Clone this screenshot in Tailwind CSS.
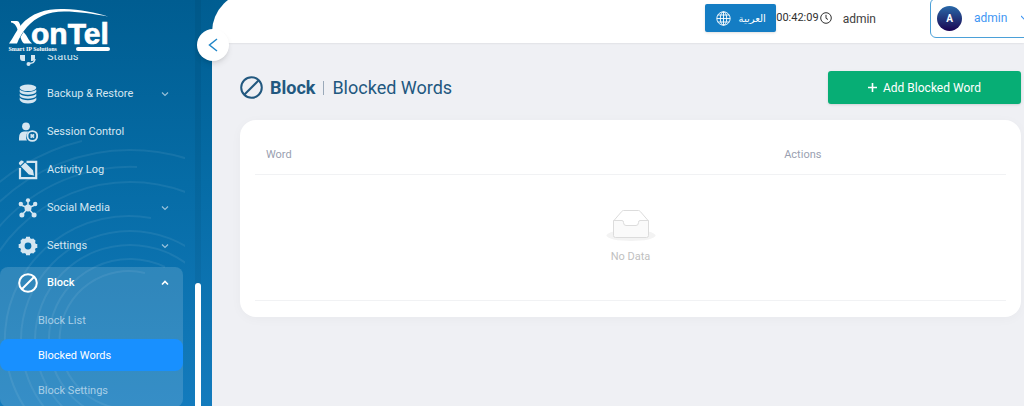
<!DOCTYPE html>
<html lang="en">
<head>
<meta charset="utf-8">
<meta name="viewport" content="width=device-width, initial-scale=1">
<title>XonTel – Blocked Words</title>
<script src="https://cdn.jsdelivr.net/npm/@tailwindcss/browser@4"></script>
</head>
<body class="h-screen overflow-hidden bg-[#eff0f4] font-[Roboto,sans-serif] text-[#22587f]">
<div class="relative flex h-full">

  <!-- Sidebar -->
  <aside class="relative flex w-[212px] shrink-0 flex-col overflow-hidden bg-linear-to-b from-[#005d91] via-[#066ca6] via-45% to-[#137bbd]">
    <svg class="pointer-events-none absolute left-0 top-0 h-[406px] w-[185px]" viewBox="0 0 185 406" fill="none" stroke="#fff" stroke-opacity=".07" stroke-width="2" aria-hidden="true">
      <path d="M-75 340A205 205 0 0 1 82 141"/><circle cx="130" cy="340" r="190"/><path d="M-43 340A173 173 0 0 1 137 167"/><circle cx="130" cy="340" r="158"/><path d="M130 464A124 124 0 1 1 151 218"/>
      <circle cx="130" cy="340" r="109"/><circle cx="130" cy="340" r="95"/><path d="M130 421A81 81 0 1 1 165 267"/><path d="M130 409A69 69 0 1 1 145 273"/>
    </svg>

    <a href="#" aria-label="XonTel Smart IP Solutions" class="relative block h-[55px] shrink-0">
      <svg class="h-[55px] w-[120px]" viewBox="0 0 120 55" fill="#fff">
        <path d="M9 43.500C13 38 16 31 21 25C32 12 48 8.500 64 9C80 9.500 96 12.500 108 16.500C94 14 78 11.500 64 11.500C48 11.500 36 17 27 27C22 33 19 38 17 43.500Z"/>
        <path d="M11 21H17C19 21 20 24 21 27L18 31C17 27 15 23 11 22.500Z"/>
        <path d="M23.500 32L26 35C28 38 29 41 32 43.500H24C22 42 21 39 20.500 37Z"/>
        <text x="31" y="43.500" font-family="Liberation Sans, sans-serif" font-weight="700" font-size="30" stroke="#fff" stroke-width=".7">onTel</text>
        <text x="8.500" y="50.500" font-family="Liberation Serif, serif" font-weight="700" font-size="6">Smart IP Solutions</text>
        <rect x="76" y="47" width="34" height="4" rx="2"/>
      </svg>
    </a>

    <nav class="relative min-h-0 flex-1 overflow-hidden text-[11px] text-[#d5e6f1]">
      <ul class="-mt-[18px] w-[183px]">
        <li><a href="#" class="flex h-[38px] items-center gap-[9px] pl-[18px] pt-[2px]">
          <svg class="size-5" viewBox="0 0 20 20" fill="currentColor"><path d="M2 7h5v7H5q-3 0-3-3zM13 7h4v4q0 3-3 3h-1z"/><path d="M17 12q-.5 4.500-6 4.500" fill="none" stroke="currentColor" stroke-width="1.500"/><circle cx="10.500" cy="17" r="2"/></svg>
          Status</a></li>
        <li><button class="flex h-[38px] w-full items-center gap-[9px] pl-[18px] pr-[14px]">
          <svg class="size-5" viewBox="0 0 20 20" fill="currentColor"><ellipse cx="10" cy="3.800" rx="8.300" ry="3.300"/><path d="M1.700 5.500C4 8.800 16 8.800 18.300 5.500V8C16 11.500 4 11.500 1.700 8zM1.700 9.500C4 13 16 13 18.300 9.500V12C16 15.500 4 15.500 1.700 12zM1.700 13.500C4 17 16 17 18.300 13.500V16C16 20.800 4 20.800 1.700 16z"/></svg>
          <span class="flex-1 text-left">Backup &amp; Restore</span>
          <svg class="size-2" viewBox="0 0 8 8" fill="none" stroke="currentColor" stroke-opacity=".7" stroke-width="1.200"><path d="M1 2.500l3 3 3-3"/></svg></button></li>
        <li><a href="#" class="flex h-[38px] items-center gap-[9px] pl-[18px]">
          <svg class="size-5" viewBox="0 0 20 20" fill="currentColor"><circle cx="8" cy="4.300" r="3.900"/><path d="M1 18.500v-2.500Q1 9.500 6 9.500h4.500Q8 12 8 15q0 2 1 3.500z"/><circle cx="14.300" cy="14" r="4.900" fill="none" stroke="currentColor" stroke-width="1.900"/><path d="M12.600 12.300l3.400 3.400m0-3.400l-3.400 3.400" stroke="currentColor" stroke-width="1.800"/></svg>
          Session Control</a></li>
        <li><a href="#" class="flex h-[38px] items-center gap-[9px] pl-[18px]">
          <svg class="size-5" viewBox="0 0 20 20" fill="currentColor"><path d="M8.500 1.800H18.200V18.200H2V8" fill="none" stroke="currentColor" stroke-width="2.200"/><path d="M1 2.500L3 .6Q4 0 5 1l1 1-3.600 3.600L1.200 4.200Q.5 3.200 1 2.500zM3 6.600L7.100 2.500 15 10.300 16 15.500 10.800 14.400z"/></svg>
          Activity Log</a></li>
        <li><button class="flex h-[38px] w-full items-center gap-[9px] pl-[18px] pr-[14px]">
          <svg class="size-5" viewBox="0 0 20 20" fill="currentColor"><path d="M10 10V3M10 10L3 7M10 10l7-3M10 10l-5.500 6.500M10 10l5.500 6.500" stroke="currentColor" stroke-width="1.500"/><circle cx="10" cy="10" r="3.500"/><circle cx="10" cy="2.300" r="2.100"/><circle cx="2.800" cy="6" r="2.200"/><circle cx="17.200" cy="6" r="2.200"/><circle cx="3.900" cy="17" r="2.500"/><circle cx="16.100" cy="17" r="2.500"/></svg>
          <span class="flex-1 text-left">Social Media</span>
          <svg class="size-2" viewBox="0 0 8 8" fill="none" stroke="currentColor" stroke-opacity=".7" stroke-width="1.200"><path d="M1 2.500l3 3 3-3"/></svg></button></li>
        <li><button class="flex h-[38px] w-full items-center gap-[9px] pl-[18px] pr-[14px]">
          <svg class="size-5" viewBox="0 0 20 20" fill="none" stroke="currentColor"><circle cx="10" cy="10" r="5.700" stroke-width="4.600"/><path d="M10 .7v18.600M.7 10h18.600M3.600 3.600l12.800 12.800M16.400 3.600L3.600 16.400" stroke-width="4" stroke-dasharray="3 100" /><path d="M10 19.300v-3M19.300 10h-3M16.400 16.400l-2-2M3.600 16.400l2-2" stroke-width="4"/></svg>
          <span class="flex-1 text-left">Settings</span>
          <svg class="size-2" viewBox="0 0 8 8" fill="none" stroke="currentColor" stroke-opacity=".7" stroke-width="1.200"><path d="M1 2.500l3 3 3-3"/></svg></button></li>
        <li class="mt-[2px] rounded-lg bg-white/15 pb-px">
          <button class="flex h-[32px] w-full items-center gap-[9px] pl-[18px] pr-[14px] font-medium text-white">
            <svg class="size-5" viewBox="0 0 20 20" fill="none" stroke="currentColor" stroke-width="2"><circle cx="10" cy="10" r="8.800"/><path d="M16 4L4 16"/></svg>
            <span class="flex-1 text-left">Block</span>
            <svg class="size-2" viewBox="0 0 8 8" fill="none" stroke="currentColor" stroke-width="1.600"><path d="M1 5.500l3-3 3 3"/></svg></button>
          <ul class="flex flex-col gap-[3px] pt-[5px]">
            <li><a href="#" class="flex h-8 items-center rounded-lg pl-[38px] pt-[2px] text-[#a9cfe7]">Block List</a></li>
            <li><a href="#" aria-current="page" class="flex h-8 items-center rounded-lg bg-[#1890ff] pl-[38px] pt-[2px] text-white">Blocked Words</a></li>
            <li><a href="#" class="flex h-8 items-center rounded-lg pl-[38px] pt-[2px] text-[#a9cfe7]">Block Settings</a></li>
          </ul>
        </li>
      </ul>
    </nav>
    <div class="absolute inset-y-0 right-[11px] w-[6px] bg-black/5 pt-[283px]"><div class="h-full rounded-t-full bg-white"></div></div>
  </aside>

  <!-- Page -->
  <div class="flex min-w-0 flex-1 flex-col overflow-hidden">
    <div class="-mt-2 bg-linear-to-b from-[#005d91] to-[#006094]">
    <header class="flex h-[51px] items-start justify-end rounded-tl-[40px] bg-white pt-2 shadow-[0_1px_2px_rgba(0,0,0,0.06)]">
      <button class="mt-1 flex h-7 w-[71px] items-center justify-center gap-2 rounded-xs bg-[#147dc4] text-white shadow-sm">
        <svg class="size-[15px]" viewBox="0 0 15 15" fill="none" stroke="currentColor" stroke-width=".9"><circle cx="7.500" cy="7.500" r="6.700"/><ellipse cx="7.500" cy="7.500" rx="3.200" ry="6.700"/><path d="M7.500.8v13.400M.8 7.500h13.400M1.800 4h11.400M1.800 11h11.400"/></svg>
        <span lang="ar" class="font-['DejaVu_Sans'] text-[10px]">العربية</span>
      </button>
      <div class="mt-[9px] flex h-[18px] items-center gap-px text-[11px] text-[#303030]">
        <time>00:42:09</time>
        <svg class="size-3" viewBox="0 0 12 12" fill="none" stroke="currentColor"><circle cx="6" cy="6" r="5.300"/><path d="M6 2.800V6.300l2 1.200"/></svg>
      </div>
      <span class="ml-[11px] mt-[10px] text-[12px] leading-[18px] text-[#404040]">admin</span>
      <button class="-mr-[6px] -mt-[2px] ml-[54px] flex h-10 w-[100px] items-center rounded-md border border-[#4ba0d8] pl-[6px] text-[12px] text-[#3f96f3]">
        <span class="flex size-[25px] shrink-0 items-center justify-center rounded-full bg-linear-to-b from-[#2768a8] to-[#180052] text-[10px] font-bold text-white">A</span>
        <span class="ml-3">admin</span>
        <svg class="ml-[14px] size-2 shrink-0" viewBox="0 0 8 8" fill="none" stroke="currentColor" stroke-width="1.100"><path d="M0 2l4 4 4-4"/></svg>
      </button>
    </header>
    </div>

    <main class="pl-7 pr-[3px] pt-7">
      <div class="flex h-[33px] items-center">
        <svg class="size-[23px]" viewBox="0 0 23 23" fill="none" stroke="currentColor" stroke-width="2"><circle cx="11.500" cy="11.500" r="10.300"/><path d="M18.500 4.500l-14 14"/></svg>
        <h1 class="ml-[7px] flex items-center text-[18px]"><strong class="font-bold">Block</strong><span class="mx-2 h-[14px] w-px bg-[#9aa9b9]"></span><span>Blocked Words</span></h1>
        <button class="ml-auto flex h-[33px] w-[193px] items-center justify-center gap-[6px] rounded-[3px] bg-[#07ae75] text-[12px] text-white shadow-sm">
          <svg class="size-[9px]" viewBox="0 0 9 9" stroke="currentColor" stroke-width="1.600"><path d="M4.500 0v9M0 4.500h9"/></svg>Add Blocked Word</button>
      </div>

      <section class="mt-4 rounded-2xl bg-white px-[15px] pb-4 pt-4 shadow-[0_2px_12px_rgba(0,0,0,0.03)]">
        <table class="w-full table-fixed border-collapse text-[11px]">
          <thead><tr class="h-[38px] border-b border-[#f1f2f4] text-left text-[#9a9fb1]">
            <th class="w-[69%] pl-[11px] font-normal">Word</th><th class="pl-[11px] font-normal">Actions</th></tr></thead>
          <tbody><tr class="border-b border-[#f1f2f4]"><td colspan="2" class="h-[126px]">
            <div class="flex flex-col items-center gap-2 text-[#bfbfbf]">
              <svg class="h-8 w-[50px]" viewBox="0 0 50 32"><ellipse cx="25" cy="26.500" rx="24.500" ry="5.500" fill="#f3f3f3"/><g stroke="#dcdcdc"><path fill="#fff" d="M7.500 12L15.700 2.500Q16.500 1.500 17.500 1.500H32.500Q33.500 1.500 34.300 2.500L42.500 12V20H7.500z"/><path fill="#fafafa" d="M7.500 11.500H16Q17.500 11.500 17.500 13.500Q17.500 16.500 20 16.500H30Q32.500 16.500 32.500 13.500Q32.500 11.500 34 11.500H42.500V26.500Q42.500 28.500 40.500 28.500H9.500Q7.500 28.500 7.500 26.500z"/></g></svg>
              <span>No Data</span>
            </div></td></tr></tbody>
        </table>
      </section>
    </main>
  </div>

  <button aria-label="Collapse menu" class="absolute left-[197px] top-[29px] flex size-8 items-center justify-center rounded-full bg-white text-[#2186c8] shadow-md">
    <svg class="h-[14px] w-[10px]" viewBox="0 0 10 14" fill="none" stroke="currentColor" stroke-width="1.500"><path d="M9 1L1.500 7 9 13"/></svg>
  </button>
</div>
</body>
</html>
